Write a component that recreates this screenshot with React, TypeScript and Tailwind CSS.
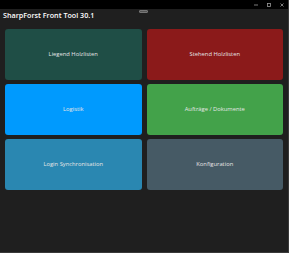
import React from "react";

const cards = [
  { label: "Liegend Holzlisten", bg: "bg-[#1f4e46]" },
  { label: "Stehend Holzlisten", bg: "bg-[#8b1a1a]" },
  { label: "Logistik", bg: "bg-[#009afe]" },
  { label: "Aufträge / Dokumente", bg: "bg-[#43a24a]" },
  { label: "Login Synchronisation", bg: "bg-[#2a87b1]" },
  { label: "Konfiguration", bg: "bg-[#465a65]" },
];

export default function App() {
  return (
    <div
      className="w-[289px] h-[253px] bg-[#1f1f1f] flex flex-col border-r border-b border-[#3a3a3a] overflow-hidden"
      style={{ fontFamily: '"Open Sans", "Noto Sans", sans-serif' }}
    >
      <div className="h-[9px] bg-black flex items-center justify-end pr-[4px] gap-[9px] shrink-0">
        <svg width="4" height="4" viewBox="0 0 4 4">
          <line x1="0" y1="2" x2="4" y2="2" stroke="#9a9a9a" strokeWidth="0.8" />
        </svg>
        <svg width="4" height="4" viewBox="0 0 4 4">
          <rect x="0.5" y="0.5" width="3" height="3" fill="none" stroke="#9a9a9a" strokeWidth="0.8" />
        </svg>
        <svg width="4" height="4" viewBox="0 0 4 4">
          <path d="M0.5 0.5 L3.5 3.5 M3.5 0.5 L0.5 3.5" stroke="#9a9a9a" strokeWidth="0.8" />
        </svg>
      </div>
      <div className="relative h-[20px] shrink-0 flex items-start pl-[3px] pt-[0px]">
        <span className="text-[7.2px] font-semibold text-white leading-[12px]">
          SharpForst Front Tool 30.1
        </span>
        <div className="absolute left-[139px] top-[1px] w-[9px] h-[3px] rounded-[1px] bg-[#555] border border-[#777]" />
      </div>
      <div className="grid grid-cols-2 gap-x-[5px] gap-y-[4px] px-[5px]">
        {cards.map((c) => (
          <div
            key={c.label}
            className={`${c.bg} h-[51px] rounded-[3px] flex items-center justify-center`}
          >
            <span className="text-[5.8px] text-[#e6e6e6] leading-none">{c.label}</span>
          </div>
        ))}
      </div>
    </div>
  );
}
